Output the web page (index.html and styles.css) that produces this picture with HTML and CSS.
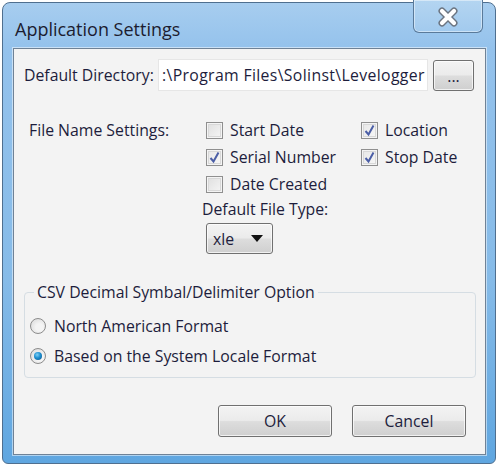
FILE: index.html
```html
<!DOCTYPE html>
<html>
<head>
<meta charset="utf-8">
<link rel="stylesheet" href="styles.css">
</head>
<body>
<div class="window">
  <div class="titlebar">
    <div class="title">Application Settings</div>
    <div class="close">
      <svg width="26" height="20" viewBox="0 0 26 20">
        <path d="M7 4 L19 16 M19 4 L7 16" stroke="#6b7480" stroke-width="7" stroke-linecap="round"/>
        <path d="M7 4 L19 16 M19 4 L7 16" stroke="#ffffff" stroke-width="4.2" stroke-linecap="round"/>
      </svg>
    </div>
  </div>
  <div class="client">
    <div class="dir-row">
      <span class="label dir-label">Default Directory:</span>
      <div class="textfield"><span class="path">:\Program Files\Solinst\Levelogger</span></div>
      <div class="btn browse">...</div>
    </div>

    <div class="fn-row">
      <span class="label fn-label">File Name Settings:</span>
      <div class="fn-body">
        <div class="checks">
          <div class="check"><span class="box"></span><span class="label">Start Date</span></div>
          <div class="check"><span class="box checked"><svg width="13" height="13" viewBox="0 0 13 13"><path d="M2.5 7 L5.5 10.5 L10.5 1.5" stroke="#4b5ea6" stroke-width="2" fill="none"/></svg></span><span class="label">Location</span></div>
          <div class="check"><span class="box checked"><svg width="13" height="13" viewBox="0 0 13 13"><path d="M2.5 7 L5.5 10.5 L10.5 1.5" stroke="#4b5ea6" stroke-width="2" fill="none"/></svg></span><span class="label">Serial Number</span></div>
          <div class="check"><span class="box checked"><svg width="13" height="13" viewBox="0 0 13 13"><path d="M2.5 7 L5.5 10.5 L10.5 1.5" stroke="#4b5ea6" stroke-width="2" fill="none"/></svg></span><span class="label">Stop Date</span></div>
          <div class="check"><span class="box"></span><span class="label">Date Created</span></div>
        </div>
        <div class="label ftype">Default File Type:</div>
        <div class="btn combo"><span>xle</span><svg width="12" height="7" viewBox="0 0 12 7"><path d="M0 0 L12 0 L6 7 Z" fill="#111"/></svg></div>
      </div>
    </div>

    <fieldset class="group">
      <legend class="label">CSV Decimal Symbal/Delimiter Option</legend>
      <div class="radio"><span class="circle"></span><span class="label">North American Format</span></div>
      <div class="radio"><span class="circle on"></span><span class="label">Based on the System Locale Format</span></div>
    </fieldset>

    <div class="buttons">
      <div class="btn dlg">OK</div>
      <div class="btn dlg">Cancel</div>
    </div>
  </div>
</div>
</body>
</html>
```
FILE: styles.css
```css
html, body {
  margin: 0;
  padding: 0;
  background: #ffffff;
}
body {
  width: 500px;
  height: 467px;
  font-family: "Open Sans", "Noto Sans", sans-serif;
  color: #1d1d3c;
}
.window {
  margin: 2px 4px 0 2px;
  height: 462px;
  box-sizing: border-box;
  border: 1px solid #4f6f8f;
  border-radius: 8px 8px 6px 6px;
  background: linear-gradient(180deg, #a7cdef 0%, #94c2ec 10%, #86bbe8 60%, #5fa6e0 100%);
  padding: 0 9px 8px 10px;
  display: flex;
  flex-direction: column;
}
.titlebar {
  height: 45px;
  display: flex;
  align-items: flex-start;
}
.title {
  margin-top: 14px;
  margin-left: 2px;
  font-size: 18px;
  color: #1c1c30;
}
.close {
  margin-left: auto;
  margin-right: 3px;
  margin-top: -3px;
  width: 70px;
  height: 33px;
  box-sizing: border-box;
  border: 1px solid #5a7a9a;
  border-top: none;
  border-radius: 0 0 6px 6px;
  background: linear-gradient(180deg, #b4d5f1, #a2caee);
  box-shadow: inset 0 0 0 1px rgba(255,255,255,0.45);
  display: flex;
  align-items: center;
  justify-content: center;
  padding-top: 2px;
}
.client {
  flex: 1;
  background: #f3f3f3;
  border: 1px solid #6f8296;
  box-shadow: 0 0 0 1px rgba(255,255,255,0.5);
  display: flex;
  flex-direction: column;
  padding: 10px 0 0 0;
}
.label {
  font-size: 15.8px;
  white-space: nowrap;
}
.dir-row {
  display: flex;
  align-items: center;
  padding-left: 10px;
  height: 32px;
}
.dir-label {
  width: 134px;
}
.textfield {
  width: 270px;
  height: 32px;
  box-sizing: border-box;
  background: #ffffff;
  border: 1px solid #e6e6e6;
  font-size: 15.8px;
  line-height: 30px;
  padding-left: 3px;
  white-space: nowrap;
  display: flex;
}
.path {
  flex: none;
  letter-spacing: 0.35px;
}
.btn {
  box-sizing: border-box;
  border: 1px solid #707070;
  border-radius: 3px;
  background: linear-gradient(180deg, #f3f3f3 0%, #ebebeb 48%, #dddddd 52%, #cfcfcf 100%);
  box-shadow: inset 0 0 0 1px rgba(255,255,255,0.7);
  display: flex;
  align-items: center;
  justify-content: center;
  font-size: 15.8px;
}
.browse {
  width: 41px;
  height: 31px;
  margin-left: 5px;
  line-height: 1;
  padding-top: 4px;
}
.fn-row {
  display: flex;
  margin-top: 28px;
  padding-left: 15px;
}
.fn-label {
  width: 177px;
  line-height: 22px;
}
.fn-body {
  display: flex;
  flex-direction: column;
}
.checks {
  display: grid;
  grid-template-columns: 155px auto;
  grid-auto-rows: 27px;
}
.check {
  display: flex;
  align-items: center;
  height: 22px;
}
.box {
  width: 17px;
  height: 17px;
  box-sizing: border-box;
  border: 1px solid #8f8f8f;
  background: linear-gradient(135deg, #dedede, #f6f6f6);
  box-shadow: inset 0 0 0 1px #f4f4f4, inset 0 0 0 2px #d8d8d8;
  margin-right: 7px;
  display: flex;
  align-items: center;
  justify-content: center;
}
.box.checked {
  background: linear-gradient(135deg, #e6e6e6, #f8f8f8);
}
.ftype {
  margin-left: -4px;
  margin-top: -2px;
  line-height: 22px;
}
.combo {
  margin-top: 3px;
  width: 67px;
  height: 31px;
  justify-content: space-between;
  padding: 0 9px 0 6px;
}
.group {
  margin: 29px 9px 0 10px;
  border: 1px solid #d5dde3;
  border-radius: 4px;
  padding: 10px 0 6px 5px;
  box-sizing: border-box;
}
.group legend {
  padding: 0 3px;
  margin-left: 4px;
  line-height: 18px;
}
.radio {
  display: flex;
  align-items: center;
  height: 30px;
}
.circle {
  width: 16px;
  height: 16px;
  box-sizing: border-box;
  border-radius: 50%;
  border: 1px solid #8c8c8c;
  background: radial-gradient(circle at 60% 60%, #f4f4f4 30%, #d6d6d6 100%);
  margin-right: 8px;
  position: relative;
}
.circle.on::after {
  content: "";
  position: absolute;
  left: 3px;
  top: 3px;
  width: 8px;
  height: 8px;
  border-radius: 50%;
  background: radial-gradient(circle at 40% 35%, #7fd0f5 0%, #1d8fd0 45%, #0d4f84 100%);
}
.buttons {
  display: flex;
  justify-content: flex-end;
  gap: 20px;
  margin-top: 27px;
  padding-right: 19px;
}
.dlg {
  width: 114px;
  height: 32px;
}
```
